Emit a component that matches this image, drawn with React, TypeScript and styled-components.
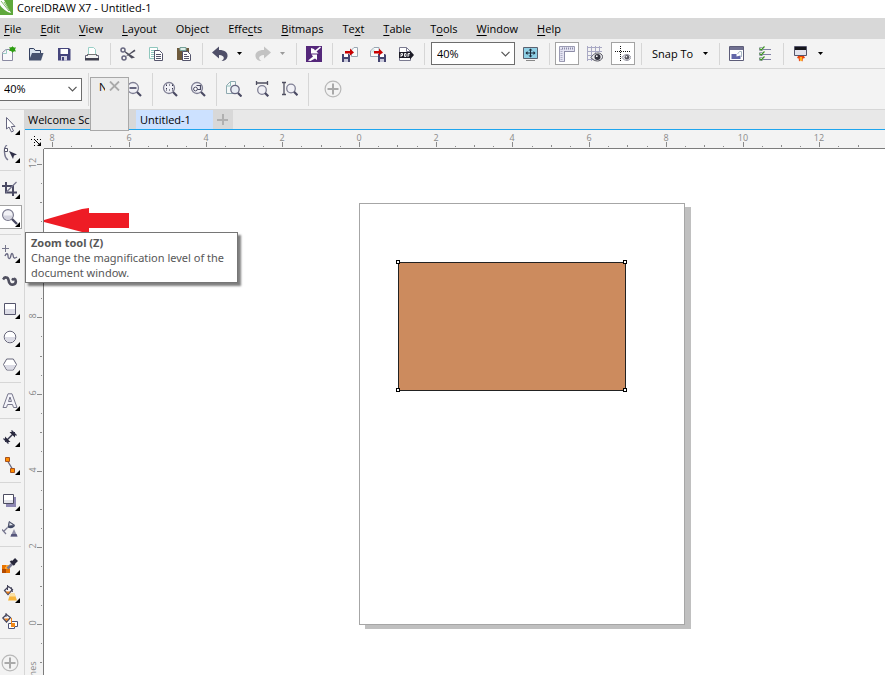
import React, { useEffect, useState } from "react";
import styled, { createGlobalStyle, css } from "styled-components";

const c = {
  panel: "#f3f3f3",
  menu: "#d8d8d8",
  line: "#d6d6d6",
  ink: "#000000",
  slate: "#4a4a63",
  steel: "#77778f",
  muted: "#8a8a8a",
  accent: "#1ea5ee",
};

const GlobalStyle = createGlobalStyle`
  *, *::before, *::after { box-sizing: border-box; }
  html, body { margin: 0; height: 100%; overflow: hidden; background: #fff; }
  body, button, select { font-family: "Open Sans", "Noto Sans", sans-serif; font-size: 11px; color: ${c.ink}; }
  svg { display: block; }
`;

/* ---------- frame ---------- */

const Shell = styled.div`
  display: flex;
  flex-direction: column;
  height: 100vh;
  overflow: hidden;
`;

const TitleBar = styled.header`
  display: flex;
  align-items: flex-start;
  gap: 4px;
  height: 18px;
  flex: none;
`;

const Title = styled.h1`
  margin: 0;
  font-size: 11px;
  font-weight: 400;
  line-height: 16px;
`;

const MenuBar = styled.nav`
  display: flex;
  flex: none;
  height: 21px;
  padding-left: 4px;
  gap: 19px;
  background: ${c.menu};
`;

const MenuItem = styled.button`
  border: 0;
  padding: 0;
  background: none;
  line-height: 20px;
  white-space: nowrap;
`;

const Key = styled.span`
  text-decoration: underline;
  text-underline-offset: 2px;
`;

const Bar = styled.div<{ $tall?: boolean }>`
  position: relative;
  display: flex;
  align-items: center;
  flex: none;
  height: ${(p) => (p.$tall ? 41 : 30)}px;
  background: ${c.panel};
  border-bottom: 1px solid ${c.line};
`;

const Group = styled.div<{ $bleed?: boolean }>`
  display: flex;
  align-items: center;
  margin-left: ${(p) => (p.$bleed ? "-6px" : "7px")};
`;

const Divider = styled.span<{ $tall?: boolean }>`
  flex: none;
  width: 8px;
  height: ${(p) => (p.$tall ? 33 : 22)}px;
  border-left: 4px solid transparent;
  background: linear-gradient(${c.line}, ${c.line}) 0 0 / 1px 100% no-repeat;
  background-origin: padding-box;
`;

const IconButton = styled.button<{ $pressed?: boolean }>`
  flex: none;
  display: grid;
  place-items: center;
  width: 28px;
  height: 24px;
  padding: 0;
  border: 0;
  background: none;
  ${(p) =>
    p.$pressed &&
    css`
      width: 24px;
      height: 23px;
      margin: 0 2px;
      background: #fff;
      border: 1px solid #a3a3a3;
    `}
`;

const CaretButton = styled.button`
  flex: none;
  display: flex;
  align-items: center;
  width: 15px;
  height: 24px;
  padding: 0 0 0 3px;
  border: 0;
  background: none;
`;

const TextButton = styled.button`
  display: flex;
  align-items: center;
  justify-content: space-between;
  width: 70px;
  height: 24px;
  padding: 0 7px 0 7px;
  border: 0;
  background: none;
  white-space: nowrap;
`;

const ComboBox = styled.div<{ $flush?: boolean }>`
  display: grid;
  align-items: center;
  width: 84px;
  height: 23px;
  margin: ${(p) => (p.$flush ? "0 2px 0 -2px" : "0 2px 0 3px")};
  background: #fff;
  border: 1px solid #6d6d6d;
  & > * {
    grid-area: 1 / 1;
  }
  & > svg {
    justify-self: end;
    margin-right: 4px;
    pointer-events: none;
  }
`;

const Select = styled.select`
  appearance: none;
  width: 100%;
  height: 21px;
  padding: 0 0 0 5px;
  border: 0;
  background: transparent;
  line-height: 20px;
`;

const Flyout = styled.div`
  position: absolute;
  z-index: 3;
  left: 90px;
  top: 8px;
  display: flex;
  align-items: flex-start;
  justify-content: space-between;
  width: 39px;
  height: 54px;
  padding: 1px 8px 0 8px;
  background: #ececec;
  border: 1px solid #a8a8a8;
`;

const FlyoutTitle = styled.span`
  width: 6px;
  overflow: hidden;
  line-height: 16px;
`;

const CloseButton = styled.button`
  padding: 2px 0 0;
  border: 0;
  background: none;
`;

/* ---------- work area ---------- */

const Body = styled.div`
  display: flex;
  flex: 1;
  min-height: 0;
`;

const Toolbox = styled.aside`
  display: flex;
  flex-direction: column;
  flex: none;
  width: 25px;
  padding-top: 1px;
  background: ${c.panel};
  border-right: 1px solid ${c.line};
`;

const ToolSlot = styled.div<{ $last?: boolean }>`
  position: relative;
  flex: none;
  display: flex;
  align-items: center;
  height: 28px;
  margin-top: ${(p) => (p.$last ? 6 : 0)}px;
`;

const ToolButton = styled.button<{ $active?: boolean; $snug?: boolean }>`
  position: relative;
  display: grid;
  place-items: center start;
  width: 22px;
  height: 24px;
  padding: 0 0 0 ${(p) => (p.$snug ? 1 : 2)}px;
  border: 1px solid transparent;
  border-left: 0;
  background: none;
  ${(p) =>
    p.$active &&
    css`
      background: #fff;
      border-color: #a3a3a3;
    `}
`;

const CornerMark = styled.svg`
  position: absolute;
  right: 1px;
  bottom: 1px;
`;

const ToolDivider = styled.span`
  flex: none;
  width: 21px;
  height: 1px;
  margin: 3px 0 4px;
  background: ${c.line};
`;

const Tooltip = styled.div`
  position: absolute;
  z-index: 4;
  left: 25px;
  top: 29px;
  width: 213px;
  padding: 2px 5px;
  background: #fff;
  border: 1px solid #767676;
  box-shadow: 3px 3px 2px rgba(0, 0, 0, 0.5);
  color: #575757;
  font-family: "Noto Sans", "Open Sans", sans-serif;
  line-height: 15px;
  white-space: nowrap;
`;

const TooltipTitle = styled.strong`
  display: block;
`;

const TooltipText = styled.p`
  margin: 0;
`;

const Document = styled.main`
  display: grid;
  flex: 1;
  min-width: 0;
  grid-template: 20px 19px minmax(0, 1fr) / 19px minmax(0, 1fr);
`;

const Tabs = styled.div`
  grid-column: 1 / -1;
  display: flex;
  background: #e8e8e8;
  border-bottom: 1px solid ${c.accent};
`;

const Tab = styled.button<{ $kind: "idle" | "current" | "add" }>`
  display: flex;
  align-items: center;
  width: ${(p) => ({ idle: 111, current: 77, add: 20 })[p.$kind]}px;
  padding: 0 0 0 ${(p) => (p.$kind === "idle" ? 3 : 4)}px;
  border: 0;
  background: ${(p) => (p.$kind === "current" ? "#cce1ff" : c.menu)};
  white-space: nowrap;
`;

const RulerCorner = styled.div`
  display: grid;
  place-items: center;
  padding: 4px 0 0 3px;
  background: ${c.panel};
`;

const RulerBox = styled.div<{ $vertical?: boolean }>`
  min-width: 0;
  min-height: 0;
  overflow: hidden;
  background: ${c.panel};
  ${(p) => (p.$vertical ? "border-right" : "border-bottom")}: 1px solid #7c7c7c;
`;

const RulerSvg = styled.svg`
  width: 100%;
  height: 100%;
  text {
    font: 9px "Open Sans", "Noto Sans", sans-serif;
    fill: ${c.muted};
    text-anchor: middle;
  }
`;

const Canvas = styled.section`
  position: relative;
  overflow: hidden;
  background: #fff;
`;

const Page = styled.div`
  position: absolute;
  left: 315px;
  top: 54px;
  width: 326px;
  height: 422px;
  background: #fff;
  border: 1px solid #a6a6a6;
  box-shadow: 6px 4px 0 #c0c0c0;
`;

const Shape = styled.div`
  position: absolute;
  left: 354px;
  top: 113px;
  width: 228px;
  height: 129px;
  background: #cc8b5e;
  border: 1px solid #222;
`;

const Handle = styled.i<{ $x: "left" | "right"; $y: "top" | "bottom" }>`
  position: absolute;
  ${(p) => p.$x}: ${(p) => (p.$x === "left" ? -3 : -2)}px;
  ${(p) => p.$y}: ${(p) => (p.$y === "top" ? -3 : -2)}px;
  width: 4px;
  height: 4px;
  background: #fff;
  border: 1px solid #000;
`;

const Pointer = styled.svg`
  position: absolute;
  left: 0;
  top: 59px;
`;

/* ---------- icons ---------- */

const Svg = ({ children, size = 16 }: { children: React.ReactNode; size?: number }) => (
  <svg width={size} height={size} viewBox={`0 0 ${size} ${size}`} fill="none" aria-hidden="true">
    {children}
  </svg>
);

const Caret = ({ color = "#000" }: { color?: string }) => (
  <svg width="5" height="3" viewBox="0 0 5 3" aria-hidden="true">
    <path d="M0 0h5L2.5 3z" fill={color} />
  </svg>
);

const Chevron = () => (
  <svg width="9" height="6" viewBox="0 0 9 6" fill="none" aria-hidden="true">
    <path d="M.5.8l4 4 4-4" stroke="#555" strokeWidth="1.2" />
  </svg>
);

const Lens = ({ children }: { children?: React.ReactNode }) => (
  <Svg>
    <circle cx="7" cy="7" r="5.5" fill="#f1f1f6" stroke="#7f7f94" strokeWidth="1.3" />
    {children}
    <path d="M11 11l4 4" stroke={c.slate} strokeWidth="2.2" />
  </Svg>
);

const Floppy = ({ x, y }: { x: number; y: number }) => (
  <g transform={`translate(${x} ${y})`}>
    <path d="M0 0h7l1 1v7H0z" fill="#444470" />
    <path d="M2 0h4v3H2z" fill="#fff" />
    <path d="M2 5h4v3H2z" fill="#c8c8da" />
  </g>
);

const Plus = ({ size = 18 }: { size?: number }) => (
  <svg width={size} height={size} viewBox="0 0 18 18" fill="none" aria-hidden="true">
    <circle cx="9" cy="9" r="7.9" stroke="#b8b8b8" strokeWidth="1.2" />
    <path d="M9 3.5v11M3.5 9h11" stroke="#a9a9a9" strokeWidth="2" />
  </svg>
);

const icons = {
  create: (
    <Svg>
      <path d="M2.5 6.5L6 3.5h6.500v11h-10z" fill="#f8f8fb" stroke="#8a8aa2" />
      <path d="M2.5 7.5h4v-4" stroke="#9bcac4" />
      <path d="M12.500 0l1 2 2.500-.8-1 2.300 1 2-2.300-.2-1.200 1.700-1-1.900L9 5l1-1.800L9.200 1l2.300.8z" fill="#2e9e12" />
      <circle cx="12.500" cy="3.300" r="2.400" fill="#2e9e12" />
    </Svg>
  ),
  open: (
    <Svg>
      <path d="M1 14V2h5l1.500 2H13v3" fill="#d9e3ee" />
      <path d="M1.500 14V2.500h4.200l1.600 2h5.200V7" stroke="#34405f" />
      <path d="M1 14.500L4 7h11.500L13 14.500z" fill="#46526f" />
    </Svg>
  ),
  save: (
    <Svg>
      <path d="M2 2h11l1.500 1.500V14.500H2z" fill="#45457c" />
      <path d="M4.500 3h7.500v5H4.500z" fill="#fff" />
      <path d="M5 10h6v4.500H5z" fill="#d5d5e4" />
      <path d="M6 11h2v3.500H6z" fill="#45457c" />
    </Svg>
  ),
  print: (
    <Svg>
      <path d="M4.500 9V1.500h5l2 2V9" fill="#fff" stroke="#99cfc6" />
      <path d="M4 9.500H1.500v4h13v-4H12" fill="#f2f2f2" stroke="#66667a" />
      <path d="M1 12h14v2.500H1z" fill="#40404f" />
      <path d="M3 8.500h10" stroke="#777" />
    </Svg>
  ),
  cut: (
    <Svg>
      <circle cx="3" cy="4" r="2" stroke="#66667f" strokeWidth="1.500" />
      <circle cx="4" cy="12" r="2" stroke="#66667f" strokeWidth="1.500" />
      <path d="M4.800 5L15 11.500l-3.500 1L5 6.500M5.500 10.500L14.500 3.500l1 1.500L8 9.500z" fill="#4d4d5c" />
    </Svg>
  ),
  copy: (
    <Svg>
      <path d="M1.500 1.500h8v11h-8z" fill="#fff" stroke="#8fc7bd" />
      <path d="M3 4.500h4M3 6.500h3M3 8.500h3M3 10.500h3" stroke="#8fc7bd" />
      <path d="M6.500 4.500h5l3 3v7h-8z" fill="#fff" stroke="#55556c" />
      <path d="M8 8.500h5M8 10.500h5M8 12.500h5" stroke="#55556c" />
    </Svg>
  ),
  paste: (
    <Svg>
      <path d="M1 2h12v12H1z" fill="#6e5a3c" />
      <path d="M4 1.500h6v3H4z" fill="#dfeee9" stroke="#75a198" />
      <path d="M6.500 5.500h5l3 3v6h-8z" fill="#fff" stroke="#55556c" />
      <path d="M8 8.500h3M8 10.500h5M8 12.500h5" stroke="#55556c" />
    </Svg>
  ),
  undo: (
    <Svg>
      <path d="M0 6.500L7 .5v3.500c6 0 9 2.500 8.500 6.500-.3 2.500-2.500 4.500-6 4.500 3-1.500 4-5.500-2.500-6V12.500z" fill="#4f4f68" />
    </Svg>
  ),
  redo: (
    <Svg>
      <path d="M16 6.500L9 .5v3.500C3 4 0 6.500.5 10.500.8 13 3 15 6.500 15 3.500 13.500 2.500 9.500 9 9v3.500z" fill="#c3c3c3" />
    </Svg>
  ),
  connect: (
    <Svg>
      <path d="M0 0h16v16H0z" fill="#54277a" />
      <path d="M5 2v5.500h7.500l-2-2L15 1.500 14 .5 9 4.500 8 3z" fill="#fff" />
      <path d="M11 8.500V14l-2-1.500L4.500 15 2 14.500l5-4-1.500-2z" fill="#fff" />
    </Svg>
  ),
  importFile: (
    <Svg>
      <Floppy x={0} y={8} />
      <path d="M9.500 4L12 1.500h3.500v9h-6z" fill="#f9fbfb" stroke="#9aa6b2" />
      <path d="M3 5h5V2.500L12 6.500l-4 3V7.500H3z" fill="#c90000" />
    </Svg>
  ),
  exportFile: (
    <Svg>
      <path d="M.5 5L4 1.500h5v9H.5z" fill="#f9fbfb" stroke="#9aa6b2" />
      <path d="M.5 6.500l4-4v4z" fill="#cfe6e2" />
      <Floppy x={8} y={8} />
      <path d="M4 5h5V2.500l4 4-4 3V7.500H4z" fill="#c90000" />
    </Svg>
  ),
  pdf: (
    <Svg>
      <path d="M1.500 1.500h7l4 4v9h-11z" fill="#fff" stroke="#7b7b90" />
      <path d="M8.500 1.500v4h4" stroke="#7b7b90" />
      <path d="M1 6h11V4.500L16 9l-4 4.500V12H1z" fill="#1b1b26" />
      <path d="M3 11V7.500h1.500v2H3M6.500 7.500v3H8v-3zM10 11V7.500h2M10 9h1.500" stroke="#fff" strokeWidth=".9" />
    </Svg>
  ),
  fullScreen: (
    <Svg>
      <path d="M.5 1.500h14v11H.5z" fill="#8fd0e6" stroke="#5b6170" />
      <path d="M3 14.500h9" stroke="#888" />
      <path d="M7.500 3v8M3 7h9" stroke="#1c2b3a" />
      <path d="M5.500 4.500L7.500 2.500l2 2zM5.500 9.500l2 2 2-2zM4.500 5L2.500 7l2 2zM10.500 5l2 2-2 2z" fill="#1c2b3a" />
    </Svg>
  ),
  rulers: (
    <Svg>
      <path d="M.5.5h15v5h-10v10h-5z" fill="#e4e4f2" stroke="#9c9cb4" />
      <path d="M3 2.500h12" stroke="#8a8aa8" strokeWidth="2" strokeDasharray="1 1" />
      <path d="M2.500 3v12" stroke="#b0b0c8" strokeWidth="2" strokeDasharray="1 1" />
      <path d="M5 5.500h10.500M5.500 5v10.500" stroke="#8c8ca6" />
    </Svg>
  ),
  grid: (
    <Svg>
      <path d="M.5 0v15M4.500 0v15M8.500 0v7M12.500 0v6M0 1.500h15M0 5.500h15M0 9.500h6M0 13.500h6" stroke="#a9a9c4" />
      <path d="M4 11.500C6 8 9 7 11 7s4 1 5 4c-1.500 3-3.500 4-5.500 4S5.500 14 4 11.500z" fill="#e8e8ec" stroke="#55555f" />
      <circle cx="10.500" cy="11" r="3" fill="#34343f" />
      <circle cx="9.800" cy="10.200" r=".9" fill="#fff" />
    </Svg>
  ),
  guides: (
    <Svg>
      <path d="M5.500 0v16M0 5.500h16" stroke="#111" strokeDasharray="1 1" />
      <path d="M7 11.500C8.500 9 10.500 8.500 12 8.500s3 .8 4 3c-1 2-2.500 3-4 3s-3.500-.8-5-3z" fill="#e3e3e8" stroke="#9a9aa6" />
      <circle cx="12" cy="11.300" r="2.300" fill="#55555f" />
      <circle cx="11.400" cy="10.700" r=".8" fill="#fff" />
    </Svg>
  ),
  welcome: (
    <Svg>
      <path d="M.5.5h14v14H.5z" fill="#fff" stroke="#5c5c78" />
      <path d="M1 1h13v3H1z" fill="#6f6f90" />
      <path d="M2.500 8h5v2.500l4-1V13h-9z" fill="#6266a8" />
      <path d="M8.500 8l2-2.500h2V11" stroke="#a9b8c4" />
    </Svg>
  ),
  options: (
    <Svg>
      <path d="M6 3.500h8M6 8.500h8M6 13.500h8" stroke="#8080a4" />
      <path d="M2.500 1.500h3v3h-3zM2.500 6.500h3v3h-3zM2.500 11.500h3v3h-3z" fill="#fff" stroke="#a5a5b9" />
      <path d="M2.500 2.500L4.200 4 7.500.5M2.500 7.500L4.200 9l3.300-3.500M2.500 12.500L4.200 14l3.300-3.500" stroke="#3a9420" strokeWidth="1.200" />
    </Svg>
  ),
  launch: (
    <Svg>
      <path d="M1.500.5h12v9h-12z" fill="#e3e3ec" stroke="#55556b" />
      <path d="M2 1h11v3H2z" fill="#15151b" />
      <path d="M5 10h6l1 2-2 .5-.5 3-2-1.500-1.500 1.500-.3-3L4 12z" fill="#e8400d" />
      <path d="M7 11h2l.5 3-1.500 1.500L6.500 13z" fill="#ffb321" />
    </Svg>
  ),
  zoomIn: (
    <Lens>
      <path d="M4 7h6M7 4v6" stroke={c.slate} strokeWidth="1.500" />
    </Lens>
  ),
  zoomOut: (
    <Lens>
      <path d="M3.500 7h7" stroke="#66667f" strokeWidth="2" />
    </Lens>
  ),
  zoomSelected: (
    <Lens>
      <path d="M4 4h7M4 9h7M4.500 4v5M10.500 4v5" stroke="#33334a" strokeDasharray="1 2" />
    </Lens>
  ),
  zoomAll: (
    <Lens>
      <circle cx="5.500" cy="8" r="1.900" fill="#fff" stroke="#4a4a63" />
      <path d="M6.500 4.500h4v4h-3" stroke="#4a4a63" strokeWidth="1.200" />
    </Lens>
  ),
  zoomPage: (
    <Svg>
      <path d="M.5 4.500l4-4h5v12h-9z" fill="#f4f8f8" stroke="#8fa9b0" />
      <path d="M.5 5h4V.5" stroke="#8fbcb9" />
      <circle cx="9" cy="8.500" r="4.200" fill="#e9edf4" stroke="#66667f" strokeWidth="1.300" />
      <path d="M12 12l3.500 3.500" stroke={c.slate} strokeWidth="2.200" />
    </Svg>
  ),
  zoomWidth: (
    <Svg>
      <path d="M2.500 0v4M13.500 0v4M3 2h10" stroke="#4f4f60" strokeWidth="1.300" />
      <circle cx="8" cy="9" r="4.300" fill="#f1f1f6" stroke="#7f7f94" strokeWidth="1.300" />
      <path d="M11 12l3.300 3.300" stroke={c.slate} strokeWidth="2.200" />
    </Svg>
  ),
  zoomHeight: (
    <Svg>
      <path d="M0 1.500h4M0 13.500h4M2 2v11" stroke="#4f4f60" strokeWidth="1.300" />
      <circle cx="9" cy="7.500" r="4.300" fill="#f1f1f6" stroke="#7f7f94" strokeWidth="1.300" />
      <path d="M12 10.700l3.500 3.500" stroke={c.slate} strokeWidth="2.200" />
    </Svg>
  ),
  pick: (
    <Svg>
      <path d="M4.500.5v11.500l2.500-2 2.500 5 2-1-2.200-4.500H13z" fill="#fff" stroke="#66667f" />
    </Svg>
  ),
  shape: (
    <Svg>
      <path d="M5 0C1.500 2 1.500 12 6 15" stroke="#77778f" strokeWidth="1.400" />
      <path d="M2.500 3.500h3v3h-3z" fill="#fff" stroke="#55556a" />
      <path d="M7 6l8 3.500-3 1L11 14z" fill="#2f2f48" />
    </Svg>
  ),
  crop: (
    <Svg>
      <path d="M4 1v10.500H15M0 5h11v10" stroke="#4a4a63" strokeWidth="2" />
      <path d="M4 11.500L14.500 1" stroke="#77778f" strokeWidth="1.200" />
    </Svg>
  ),
  zoom: (
    <Svg>
      <circle cx="6" cy="6" r="5.400" fill="#f2f2f6" stroke="#77778c" strokeWidth="1.200" />
      <path d="M1.500 6.500h9c0 2.500-2 4.300-4.500 4.300S1.500 9 1.500 6.500z" fill="#d3d3de" />
      <path d="M10 10l5 5" stroke={c.slate} strokeWidth="2.400" />
    </Svg>
  ),
  freehand: (
    <Svg>
      <path d="M3.500 0v7M0 3.500h7" stroke="#77778c" />
      <path d="M3 11c1-3 3-3 3 0s2 4 2.800 0 2.200-2.500 2.400 0 1.800 2.500 3.800 1" stroke="#66667f" strokeWidth="1.300" />
    </Svg>
  ),
  artistic: (
    <Svg>
      <path d="M1 6.500c2-3 5-2.500 5.500.5.500 4 2.500 5 5 4.500 3-.7 3-5 .5-6" stroke="#4f4f5f" strokeWidth="2.600" />
      <circle cx="11" cy="6.300" r="1.500" fill="#4f4f5f" />
      <path d="M1 4.500l3-1" stroke="#4f4f5f" />
    </Svg>
  ),
  rectangle: (
    <Svg>
      <path d="M2.500 2.500h11v11h-11z" fill="#fff" stroke="#55556c" />
      <path d="M3 8h10v5H3z" fill="#dcdce6" />
    </Svg>
  ),
  ellipse: (
    <Svg>
      <circle cx="8" cy="8" r="5.800" fill="#fff" stroke="#66667a" />
      <path d="M2.800 8h10.400c0 3-2.300 5.200-5.200 5.200S2.800 11 2.800 8z" fill="#dcdce6" />
    </Svg>
  ),
  polygon: (
    <Svg>
      <path d="M4.700 2h6.600l3.200 5.500-3.200 5.500H4.700L1.500 7.500z" fill="#fff" stroke="#66667a" />
      <path d="M2.500 8h11L11 12.500H5z" fill="#dcdce6" />
    </Svg>
  ),
  text: (
    <Svg>
      <path d="M6 .8h4L15 14.500h-3.500l-1-3h-5l-1 3H1zM6.500 8.500h3L8 4z" fill="#f4f4fa" stroke="#77778c" />
    </Svg>
  ),
  dimension: (
    <Svg>
      <path d="M4 12L12 4" stroke="#33334a" strokeWidth="1.500" />
      <path d="M3 7.500v5.500h5.500zM7.500 3H13v5.500z" fill="#26263a" />
      <path d="M1.500 9.500l5 5M9.500 1.500l5 5" stroke="#33334a" strokeWidth="1.300" />
    </Svg>
  ),
  connector: (
    <Svg>
      <path d="M5 3l6 10" stroke="#66667f" strokeWidth="1.300" />
      <path d="M3.500.5h4v4h-4zM8.500 11.500h4v4h-4z" fill="#ff8c00" stroke="#a6511c" />
    </Svg>
  ),
  shadow: (
    <Svg>
      <path d="M4 4h10v10H4z" fill="#8d87b3" />
      <path d="M1.500 1.500h10v9h-10z" fill="#fff" stroke="#4c4c60" />
      <path d="M2 7h9v3H2z" fill="#e3e3ea" />
    </Svg>
  ),
  transparency: (
    <Svg>
      <path d="M7 0l6 4c-.5 3-4 4-7.500 2.500z" fill="#3d4663" />
      <path d="M7.300 1l4.500 3.200-5 .8z" fill="#dfe7ef" stroke="#55556b" strokeWidth=".8" />
      <path d="M5.500 6.500L2 10M0 8.500L4 13" stroke="#77778f" strokeWidth="1.200" />
      <path d="M12 8l3.500 7.500h-7z" fill="#9292aa" />
      <path d="M9.500 13l-1 2.500h7l-1-2.500z" fill="#55557a" />
    </Svg>
  ),
  eyedropper: (
    <Svg>
      <path d="M0 8h8v8H0z" fill="#e97400" />
      <path d="M0 12h4v4H0z" fill="#b34a00" />
      <path d="M4 8h4v4H4zM3 10h1v2H3z" fill="#ffa733" />
      <path d="M5.500 11.500L11 6" stroke="#77778f" strokeWidth="2.600" />
      <path d="M8.500 4l4 4" stroke="#26263a" strokeWidth="2.200" />
      <path d="M11 6l3.500-3.500" stroke="#26263a" strokeWidth="4" />
    </Svg>
  ),
  fill: (
    <Svg>
      <path d="M2.500 5.500L6.500 1.500l4 3-4.500 5z" fill="#f5f5fa" stroke="#44445a" strokeWidth="1.200" />
      <path d="M5.500 0v5M9 2l1.500 5" stroke="#44445a" />
      <path d="M3.500 6.500h5L6 9z" fill="#e97d12" />
      <path d="M8.500 8.500h4l2.500 7H6z" fill="#f7b53b" />
      <path d="M8.500 8.500h4l1 3h-6z" fill="#fbe2a5" />
    </Svg>
  ),
  smartFill: (
    <Svg>
      <path d="M.8 5L4.500 1.500l4 3-4 4.500z" fill="#f5f5fa" stroke="#44445a" strokeWidth="1.200" />
      <path d="M4 0v4" stroke="#44445a" />
      <path d="M2 5.500h5L4.500 8z" fill="#e97d12" />
      <path d="M9.500 8.500h6v5h-6zM6.500 10.500h6v5h-6z" fill="#fff" stroke="#4e5478" />
      <path d="M9 10h4v4H9z" fill="#f08a1c" />
      <path d="M9.500 5v6" stroke="#e97d12" />
    </Svg>
  ),
};

type IconName = keyof typeof icons;

/* ---------- pieces ---------- */

const menus: [string, string, string][] = [
  ["", "F", "ile"],
  ["", "E", "dit"],
  ["", "V", "iew"],
  ["", "L", "ayout"],
  ["Ob", "j", "ect"],
  ["Effe", "c", "ts"],
  ["", "B", "itmaps"],
  ["Te", "x", "t"],
  ["", "T", "able"],
  ["T", "o", "ols"],
  ["", "W", "indow"],
  ["", "H", "elp"],
];

const Tool = ({ icon, label, pressed }: { icon: IconName; label: string; pressed?: boolean }) => (
  <IconButton aria-label={label} $pressed={pressed} aria-pressed={pressed}>
    {icons[icon]}
  </IconButton>
);

const ZoomLevel = ({ label, flush }: { label: string; flush?: boolean }) => (
  <ComboBox $flush={flush}>
    <Select aria-label={label} defaultValue="40%">
      <option>40%</option>
    </Select>
    <Chevron />
  </ComboBox>
);

type ToolEntry = { icon: IconName; label: string; plain?: boolean };

const toolGroups: ToolEntry[][] = [
  [
    { icon: "pick", label: "Pick tool" },
    { icon: "shape", label: "Shape tool" },
  ],
  [
    { icon: "crop", label: "Crop tool" },
    { icon: "zoom", label: "Zoom tool" },
  ],
  [
    { icon: "freehand", label: "Freehand tool" },
    { icon: "artistic", label: "Artistic media tool", plain: true },
    { icon: "rectangle", label: "Rectangle tool" },
    { icon: "ellipse", label: "Ellipse tool" },
    { icon: "polygon", label: "Polygon tool" },
  ],
  [{ icon: "text", label: "Text tool" }],
  [
    { icon: "dimension", label: "Parallel dimension tool" },
    { icon: "connector", label: "Connector tool" },
  ],
  [
    { icon: "shadow", label: "Drop shadow tool" },
    { icon: "transparency", label: "Transparency tool", plain: true },
  ],
  [
    { icon: "eyedropper", label: "Color eyedropper tool" },
    { icon: "fill", label: "Interactive fill tool" },
    { icon: "smartFill", label: "Smart fill tool", plain: true },
  ],
];

/* Screen pixels per inch of the drawing at 40% zoom. */
const UNIT = 38.35;

const range = (from: number, to: number) => Array.from({ length: to - from + 1 }, (_, i) => from + i);

const tickLength = (half: number) => (half % 4 === 0 ? 5 : half % 2 === 0 ? 2 : 1);

const useWindowWidth = () => {
  const [width, setWidth] = useState(window.innerWidth);
  useEffect(() => {
    const update = () => setWidth(window.innerWidth);
    window.addEventListener("resize", update);
    return () => window.removeEventListener("resize", update);
  }, []);
  return width;
};

const HorizontalRuler = () => {
  const lastHalf = Math.floor(((useWindowWidth() - 370) * 2) / UNIT);
  return (
    <RulerBox>
      <RulerSvg aria-label="Horizontal ruler">
        {range(-16, lastHalf).map((half) => {
          const x = Math.round(315 + (half * UNIT) / 2);
          const len = tickLength(half);
          return (
            <g key={half}>
              <rect x={x} y={17 - len} width="1" height={len} fill={c.muted} />
              {half % 4 === 0 && (
                <text x={x} y="11">
                  {Math.abs(half / 2)}
                </text>
              )}
            </g>
          );
        })}
      </RulerSvg>
    </RulerBox>
  );
};

/* The 10-inch mark lies under the tooltip, so its label is left out. */
const VerticalRuler = () => (
  <RulerBox $vertical>
    <RulerSvg aria-label="Vertical ruler">
      {range(-40, 24).map((half) => {
        const y = Math.round(475 - (half * UNIT) / 2);
        const len = tickLength(half);
        return (
          <g key={half}>
            <rect x={17 - len} y={y} width={len} height="1" fill={c.muted} />
            {half % 4 === 0 && half >= 0 && half !== 20 && (
              <text transform={`translate(11 ${y - 1}) rotate(-90)`}>{half / 2}</text>
            )}
          </g>
        );
      })}
      <text transform="translate(11 526) rotate(-90)">inches</text>
    </RulerSvg>
  </RulerBox>
);

export default function App() {
  return (
    <Shell>
      <GlobalStyle />
      <TitleBar>
        <svg width="13" height="15" viewBox="0 0 13 15" aria-hidden="true">
          <path d="M0 0h13v15H0z" fill="#5fa83c" />
          <path d="M0 0h4l7 13C6 12 2 8 0 5z" fill="#fff" />
          <path d="M1 1l8 10M4 2l6 9" stroke="#5fa83c" strokeWidth=".8" />
        </svg>
        <Title>CorelDRAW X7 - Untitled-1</Title>
      </TitleBar>

      <MenuBar aria-label="Main menu">
        {menus.map(([before, key, after]) => (
          <MenuItem key={before + key + after}>
            {before}
            <Key>{key}</Key>
            {after}
          </MenuItem>
        ))}
      </MenuBar>

      <Bar role="toolbar" aria-label="Standard">
        <Group $bleed>
          <Tool icon="create" label="New" />
          <Tool icon="open" label="Open" />
          <Tool icon="save" label="Save" />
          <Tool icon="print" label="Print" />
        </Group>
        <Divider />
        <Tool icon="cut" label="Cut" />
        <Tool icon="copy" label="Copy" />
        <Tool icon="paste" label="Paste" />
        <Divider />
        <Tool icon="undo" label="Undo" />
        <CaretButton aria-label="Undo list">
          <Caret />
        </CaretButton>
        <Tool icon="redo" label="Redo" />
        <CaretButton aria-label="Redo list">
          <Caret color="#9a9a9a" />
        </CaretButton>
        <Divider />
        <Tool icon="connect" label="Search content" />
        <Divider />
        <Tool icon="importFile" label="Import" />
        <Tool icon="exportFile" label="Export" />
        <Tool icon="pdf" label="Publish to PDF" />
        <Divider />
        <ZoomLevel label="Zoom levels" />
        <Tool icon="fullScreen" label="Full-screen preview" />
        <Divider />
        <Tool icon="rulers" label="Show rulers" pressed />
        <Tool icon="grid" label="Show grid" />
        <Tool icon="guides" label="Show guidelines" pressed />
        <Divider />
        <TextButton>
          Snap To
          <Caret />
        </TextButton>
        <Divider />
        <Tool icon="welcome" label="Welcome screen" />
        <Tool icon="options" label="Options" />
        <Divider />
        <Tool icon="launch" label="Application launcher" />
        <CaretButton aria-label="Launcher list">
          <Caret />
        </CaretButton>
      </Bar>

      <Bar $tall role="toolbar" aria-label="Property bar">
        <ZoomLevel label="Zoom" flush />
        <Divider $tall />
        <Tool icon="zoomIn" label="Zoom in" />
        <Tool icon="zoomOut" label="Zoom out" />
        <Divider $tall />
        <Tool icon="zoomSelected" label="Zoom to selected" />
        <Tool icon="zoomAll" label="Zoom to all objects" />
        <Divider $tall />
        <Tool icon="zoomPage" label="Zoom to page" />
        <Tool icon="zoomWidth" label="Zoom to page width" />
        <Tool icon="zoomHeight" label="Zoom to page height" />
        <Divider $tall />
        <Group>
          <IconButton aria-label="Customize property bar">
            <Plus />
          </IconButton>
        </Group>
        <Flyout>
          <FlyoutTitle>N</FlyoutTitle>
          <CloseButton aria-label="Close">
            <svg width="11" height="10" viewBox="0 0 11 10" fill="none">
              <path d="M1 .5l9 9M10 .5l-9 9" stroke="#a9a9a9" strokeWidth="1.800" />
            </svg>
          </CloseButton>
        </Flyout>
      </Bar>

      <Body>
        <Toolbox aria-label="Toolbox">
          {toolGroups.map((group, i) => (
            <React.Fragment key={i}>
              {group.map((tool) => {
                const active = tool.icon === "zoom";
                return (
                  <ToolSlot key={tool.icon}>
                    <ToolButton
                      aria-label={tool.label}
                      aria-describedby={active ? "zoom-tip" : undefined}
                      $active={active}
                    >
                      {icons[tool.icon]}
                      {!tool.plain && (
                        <CornerMark width="5" height="5" viewBox="0 0 5 5" aria-hidden="true">
                          <path d="M5 0v5H0z" fill="#000" />
                        </CornerMark>
                      )}
                    </ToolButton>
                    {active && (
                      <Tooltip role="tooltip" id="zoom-tip">
                        <TooltipTitle>Zoom tool (Z)</TooltipTitle>
                        <TooltipText>
                          Change the magnification level of the
                          <br />
                          document window.
                        </TooltipText>
                      </Tooltip>
                    )}
                  </ToolSlot>
                );
              })}
              <ToolDivider />
            </React.Fragment>
          ))}
          <ToolSlot $last>
            <ToolButton aria-label="Customize toolbox" $snug>
              <Plus />
            </ToolButton>
          </ToolSlot>
        </Toolbox>

        <Document>
          <Tabs>
            <Tab $kind="idle">Welcome Screen</Tab>
            <Tab $kind="current">Untitled-1</Tab>
            <Tab $kind="add" aria-label="New document">
              <svg width="11" height="11" viewBox="0 0 11 11" aria-hidden="true">
                <path d="M5 0h2v5h4v2H7v4H5V7H0V5h5z" fill="#b0b0b0" />
              </svg>
            </Tab>
          </Tabs>
          <RulerCorner>
            <svg width="11" height="11" viewBox="0 0 11 11" fill="none" aria-hidden="true">
              <path d="M3.500 0v11M0 3.500h11" stroke="#000" strokeDasharray="1 2" />
              <path d="M4 4l5 5" stroke="#000" />
              <path d="M10 6v4H6z" fill="#000" />
            </svg>
          </RulerCorner>
          <HorizontalRuler />
          <VerticalRuler />
          <Canvas aria-label="Drawing window">
            <Page />
            <Shape>
              <Handle $x="left" $y="top" />
              <Handle $x="right" $y="top" />
              <Handle $x="left" $y="bottom" />
              <Handle $x="right" $y="bottom" />
            </Shape>
            <Pointer width="86" height="26" viewBox="0 0 86 26" aria-hidden="true">
              <path d="M0 12L38 1l7-1v5h40v15H45v5l-7-1L0 14z" fill="#ee1c25" />
            </Pointer>
          </Canvas>
        </Document>
      </Body>
    </Shell>
  );
}
